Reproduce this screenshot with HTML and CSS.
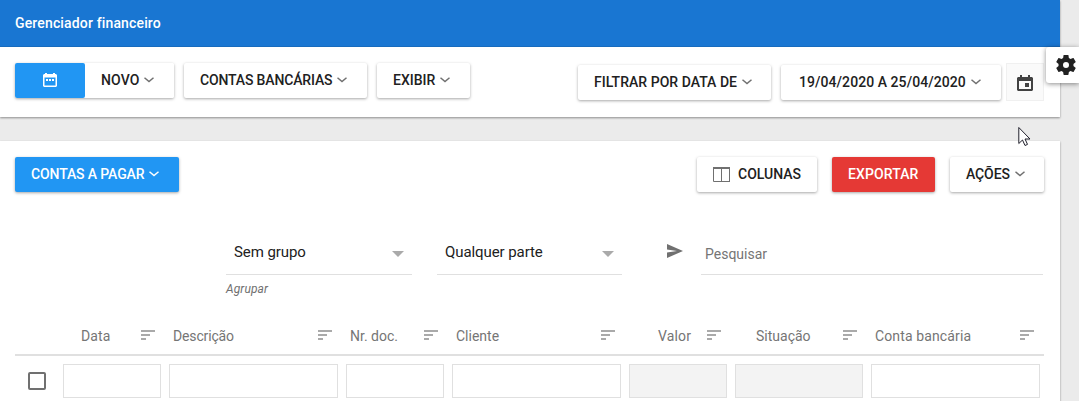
FILE: index.html
```
<!DOCTYPE html>
<html lang="pt-BR">
<head>
<meta charset="utf-8">
<title>Gerenciador financeiro</title>
<link rel="stylesheet" href="styles.css">
</head>
<body>
<svg class="defs" width="0" height="0">
  <symbol id="chevron" viewBox="0 0 10 6"><path d="M.5 .8 5 4.6 9.500 .8" fill="none" stroke="currentColor" stroke-width="1.5"/></symbol>
  <symbol id="sort" viewBox="0 0 14 10"><path d="M0 0h14v2H0zM0 4h9v2H0zM0 8h5v2H0z" fill="currentColor"/></symbol>
</svg>
<main class="page">
  <section class="panel">
    <header class="titlebar">Gerenciador financeiro</header>
    <div class="toolbar">
      <div class="group">
        <div class="split">
          <button class="btn primary date-btn"><svg width="14" height="14" viewBox="0 0 14 14"><path fill="currentColor" fill-rule="evenodd" d="M2 0h2v1h6V0h2v1h1l1 1v11l-1 1H1l-1-1V2l1-1h1zM1.500 4.500v8h11v-8zM3 6h2v2H3zm3 0h2v2H6zm3 0h2v2H9z"/></svg></button>
          <button class="btn novo"><span>NOVO</span><svg class="chev"><use href="#chevron"/></svg></button>
        </div>
        <button class="btn bancos"><span>CONTAS BANCÁRIAS</span><svg class="chev"><use href="#chevron"/></svg></button>
        <button class="btn exibir"><span>EXIBIR</span><svg class="chev"><use href="#chevron"/></svg></button>
      </div>
      <div class="filters">
        <button class="btn filtrar"><span>FILTRAR POR DATA DE</span><svg class="chev"><use href="#chevron"/></svg></button>
        <button class="btn periodo"><span>19/04/2020 A 25/04/2020</span><svg class="chev"><use href="#chevron"/></svg></button>
        <button class="calendar"><svg width="16" height="16" viewBox="0 0 16 16"><path fill="currentColor" fill-rule="evenodd" d="M3 0h2v2h6V0h2v2h2l1 1v12l-1 1H1l-1-1V3l1-1h2zM2 6v8h12V6zM8 8h4v4H8z"/></svg></button>
      </div>
    </div>
  </section>
  <section class="panel content">
    <div class="actions">
      <button class="btn primary pagar"><span>CONTAS A PAGAR</span><svg class="chev"><use href="#chevron"/></svg></button>
      <div class="right">
        <button class="btn colunas"><svg width="17" height="15" viewBox="0 0 17 15"><path fill="none" stroke="#707070" d="M.5 1h16v13.500H.5zM8.500 1v13.500"/><path d="M0 0h17v2H0zM16 0h1v15h-1z" fill="#707070"/></svg><span>COLUNAS</span></button>
        <button class="btn danger exportar"><span>EXPORTAR</span></button>
        <button class="btn acoes"><span>AÇÕES</span><svg class="chev"><use href="#chevron"/></svg></button>
      </div>
    </div>
    <div class="search-row">
      <div class="field grupo"><div class="select"><span>Sem grupo</span><i class="caret"></i></div><small>Agrupar</small></div>
      <div class="field parte"><div class="select"><span>Qualquer parte</span><i class="caret"></i></div></div>
      <svg class="send" width="16" height="14" viewBox="0 0 16 14"><path fill="currentColor" d="M0 0 16 7 0 14V8.500L10 7 0 5.500z"/></svg>
      <div class="search"><span>Pesquisar</span></div>
    </div>
    <div class="grid head">
      <div></div>
      <div class="th data"><span>Data</span><svg class="sort"><use href="#sort"/></svg></div>
      <div class="th descricao"><span>Descrição</span><svg class="sort"><use href="#sort"/></svg></div>
      <div class="th doc"><span>Nr. doc.</span><svg class="sort"><use href="#sort"/></svg></div>
      <div class="th cliente"><span>Cliente</span><svg class="sort"><use href="#sort"/></svg></div>
      <div class="th valor"><span>Valor</span><svg class="sort"><use href="#sort"/></svg></div>
      <div class="th situacao"><span>Situação</span><svg class="sort"><use href="#sort"/></svg></div>
      <div class="th conta"><span>Conta bancária</span><svg class="sort"><use href="#sort"/></svg></div>
    </div>
    <div class="grid inputs">
      <div class="check"></div>
      <div class="input"></div><div class="input"></div><div class="input"></div><div class="input"></div>
      <div class="input off"></div><div class="input off"></div><div class="input"></div>
    </div>
  </section>
</main>
<aside class="settings"><svg width="20" height="20" viewBox="2 2 20 20"><path fill="currentColor" d="M19.430 12.980c.04-.32.07-.64.07-.98s-.03-.66-.07-.98l2.110-1.650c.19-.15.24-.42.120-.64l-2-3.460c-.12-.22-.39-.3-.61-.22l-2.490 1c-.52-.4-1.080-.73-1.690-.98l-.38-2.650C14.460 2.180 14.250 2 14 2h-4c-.25 0-.46.18-.49.420l-.38 2.650c-.61.25-1.170.59-1.690.98l-2.490-1c-.23-.09-.49 0-.61.220l-2 3.460c-.13.220-.07.490.12.640l2.110 1.650c-.04.32-.07.650-.07.980s.03.66.070.98l-2.110 1.650c-.19.15-.24.42-.12.640l2 3.460c.12.22.39.3.610.22l2.490-1c.52.4 1.080.73 1.690.98l.38 2.650c.03.24.24.42.490.42h4c.25 0 .46-.18.490-.42l.38-2.650c.61-.25 1.170-.59 1.690-.98l2.490 1c.23.09.49 0 .61-.22l2-3.460c.12-.22.070-.49-.12-.64zM12 15a3 3 0 1 1 0-6 3 3 0 0 1 0 6z"/></svg></aside>
<svg class="cursor" width="13" height="21" viewBox="0 0 13 21"><path fill="#fff" stroke="#20202c" d="M.8 1.500v16l3.700-3.500 2.500 5.500 2.500-1.100-2.500-5.400h5z"/></svg>
</body>
</html>
```
FILE: styles.css
```
* { box-sizing: border-box; }
body { margin: 0; height: 401px; overflow: hidden; background: #ebebeb; font: 14px/20px Roboto, sans-serif; color: #212121; }
.defs { position: absolute; }
.page { width: 1060px; display: flex; flex-direction: column; gap: 24px; }
.panel { background: #fff; box-shadow: 0 1px 2px rgba(0,0,0,.4); }
.titlebar { height: 47px; padding: 13px 15px 0; background: #1976d2; border-bottom: 1px solid #176bbd; color: #fff; font-weight: 500; letter-spacing: .15px; }
.toolbar { height: 70px; padding: 16px 16px 0 15px; display: flex; justify-content: space-between; align-items: flex-start; }
.group { display: flex; gap: 10px; }
.split { display: flex; border-radius: 2px; box-shadow: 0 1px 3px rgba(0,0,0,.35); }
.btn { height: 35px; display: flex; align-items: center; padding: 0 0 1px 16px; border: 0; border-radius: 2px; background: #fff; color: #212121; font: 500 14px/20px Roboto, sans-serif; white-space: nowrap; box-shadow: 0 1px 3px rgba(0,0,0,.35); }
.split .btn { box-shadow: none; }
.chev { width: 10px; height: 6px; margin-left: 5px; color: #707070; flex: none; }
.btn.primary { background: #2196f3; color: #fff; }
.btn.danger { background: #e53935; color: #fff; }
.primary .chev { color: #fff; }
.btn.date-btn { width: 70px; padding: 0 0 1px; justify-content: center; }
.novo { width: 89px; letter-spacing: .1px; }
.bancos { width: 183px; letter-spacing: -.15px; }
.exibir { width: 93px; }
.filters { display: flex; align-items: center; }
.filtrar { width: 193px; margin-right: 10px; letter-spacing: .03px; }
.periodo { width: 220px; margin-right: 5px; letter-spacing: .06px; }
.btn.periodo { padding-left: 18px; }
.calendar { width: 38px; height: 38px; padding: 2px 0 0; border: 1px solid #f0f0f0; background: #fafafa; color: #424242; display: grid; place-items: center; }
.content { height: 280px; padding: 16px 16px 0 15px; }
.actions, .right { display: flex; justify-content: space-between; }
.right { gap: 15px; }
.pagar { width: 164px; letter-spacing: -.12px; }
.colunas { width: 120px; gap: 8px; }
.colunas svg { margin-top: 1px; }
.exportar { width: 103px; letter-spacing: .1px; }
.acoes { width: 94px; letter-spacing: -.1px; }
.search-row { height: 123px; padding: 44px 1px 0 211px; display: flex; align-items: flex-start; }
.field { margin-right: 25px; }
.grupo { width: 186px; }
.parte { width: 185px; margin-right: 45px; }
.select { height: 39px; padding: 6px 8px 0; border-bottom: 1px solid #e0e0e0; display: flex; justify-content: space-between; font-size: 15px; letter-spacing: -.08px; }
.caret { margin-top: 9px; width: 12px; height: 6px; background: #aaa; clip-path: polygon(0 0, 100% 0, 50% 100%); }
.field small { display: block; font: italic 12px/20px Roboto, sans-serif; color: #707070; padding-top: 4px; letter-spacing: .1px; }
.send { margin: 8px 18px 0 0; color: #707070; }
.search { flex: 1; height: 39px; padding: 8px 4px; border-bottom: 1px solid #e0e0e0; color: #757575; }
.grid { display: grid; grid-template-columns: 44px 106px 177px 106px 177px 106px 136px 177px; }
.head { height: 41px; border-bottom: 2px solid #e0e0e0; color: #757575; }
.th { display: flex; justify-content: space-between; padding: 11px 10px 0 8px; }
.data { padding-left: 22px; letter-spacing: .1px; }
.descricao { letter-spacing: -.15px; }
.conta { letter-spacing: .13px; }
.valor { padding-left: 33px; letter-spacing: .15px; }
.situacao { padding-left: 25px; }
.sort { width: 14px; height: 10px; margin-top: 4px; color: #aaa; }
.inputs { padding-top: 8px; }
.input { height: 34px; margin: 0 4px; border: 1px solid #e0e0e0; background: #fff; }
.off { background: #f3f3f3; }
.check { width: 18px; height: 18px; margin: 8px 0 0 13px; border: 2px solid #707070; border-radius: 2px; }
.settings { position: absolute; left: 1046px; top: 47px; width: 33px; height: 36px; padding: 8px 0 0 10px; overflow: hidden; background: #fff; border-radius: 3px 0 0 3px; box-shadow: 0 1px 5px rgba(0,0,0,.45); clip-path: inset(-8px 0 -8px -8px); }
.cursor { position: absolute; left: 1018px; top: 126px; }
```
